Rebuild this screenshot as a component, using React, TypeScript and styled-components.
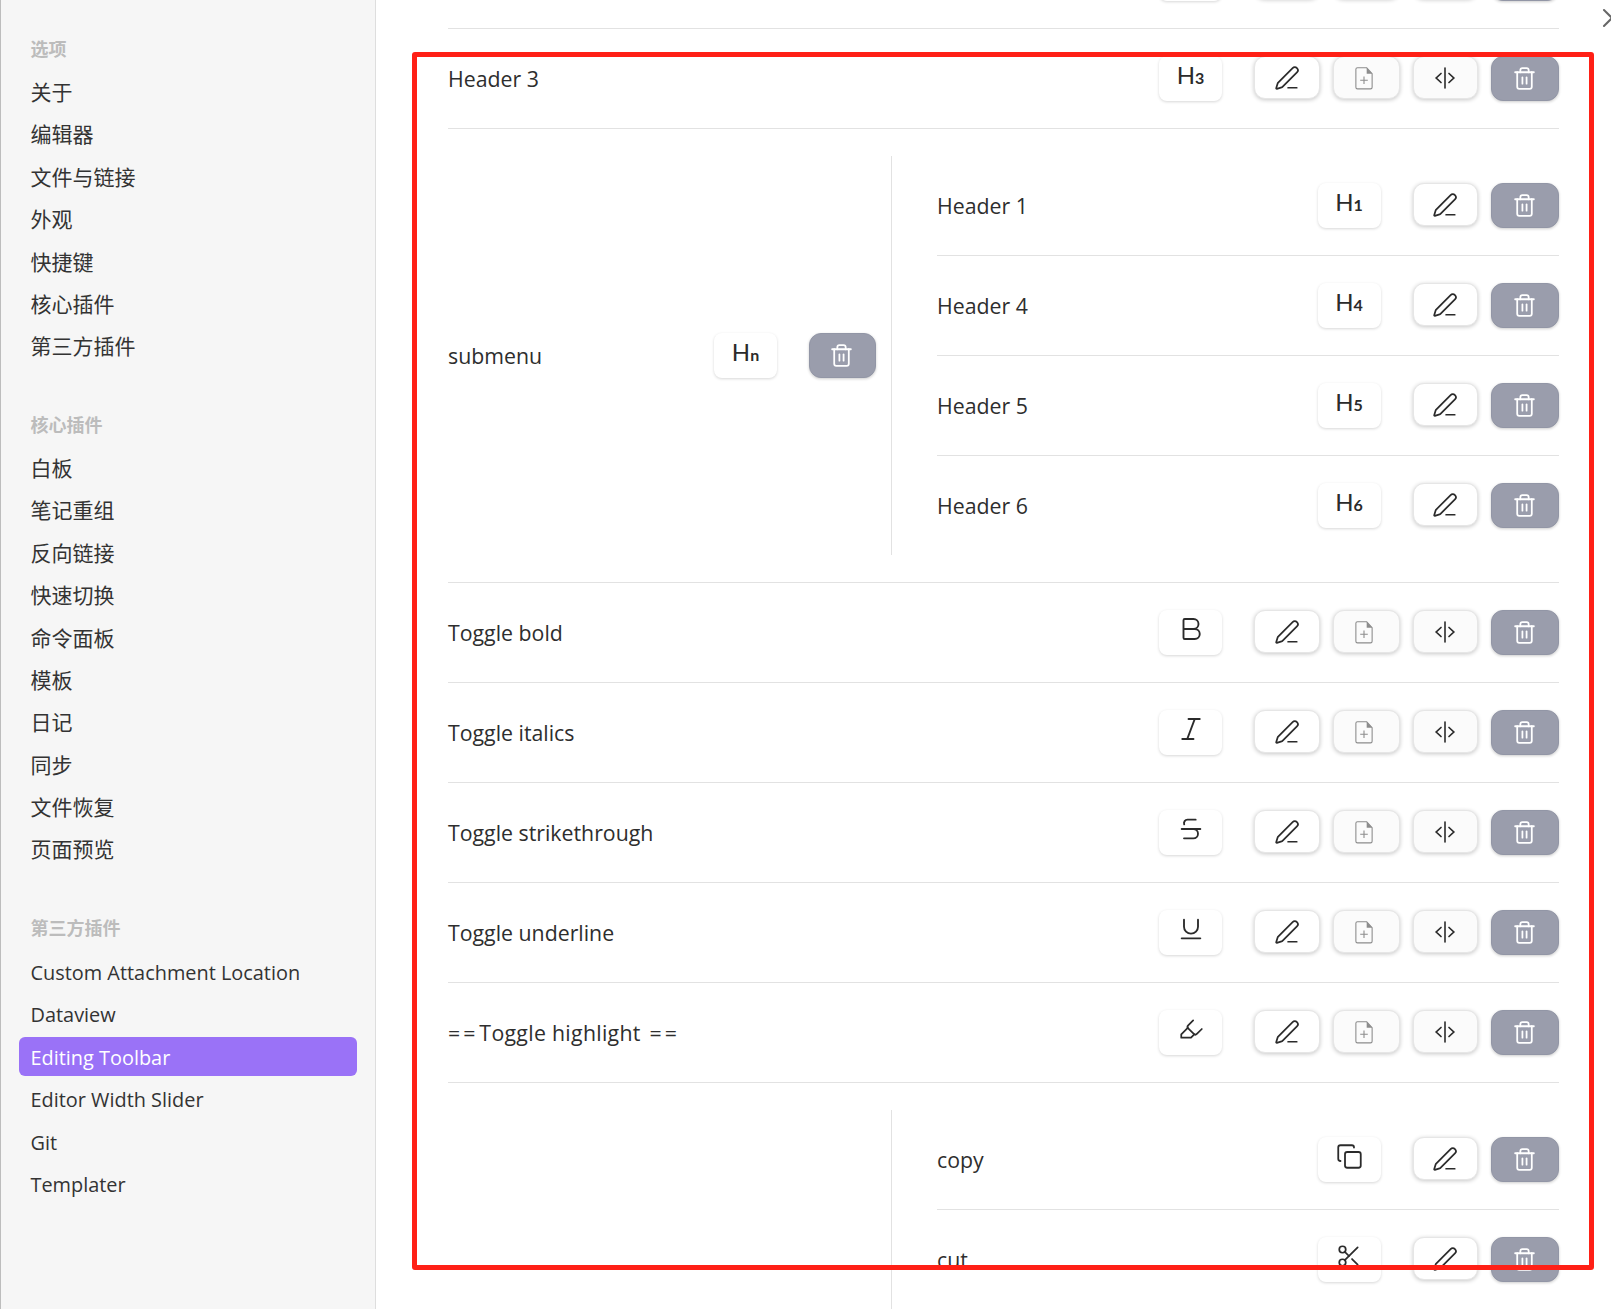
import React from 'react';
import styled, { createGlobalStyle } from 'styled-components';
import {
  Bold,
  Copy,
  Highlighter,
  Italic,
  PenLine,
  Scissors,
  Strikethrough,
  Trash2,
  Underline,
  X
} from 'lucide-react';

const FONT = '"Open Sans", "Noto Sans CJK SC", sans-serif';

const GlobalStyle = createGlobalStyle`
  html, body {
    margin: 0;
    padding: 0;
    height: 1309px;
    overflow: hidden;
    background: #fff;
  }
  * { box-sizing: border-box; }
`;

const Page = styled.div`
  position: relative;
  display: flex;
  width: 1611px;
  height: 1309px;
  overflow: hidden;
  font-family: ${FONT};
  color: #2e2e2e;
`;

const Sidebar = styled.nav`
  flex: 0 0 376px;
  height: 100%;
  padding: 35px 18px 0 18px;
  background: #f6f6f6;
  border-left: 1px solid #bdbdbd;
  border-right: 1px solid #dedede;
`;

const Section = styled.section`
  margin-bottom: 44.6px;
`;

const SectionTitle = styled.h3`
  margin: 0 0 10px;
  padding-left: 11.5px;
  height: 28px;
  line-height: 28px;
  font-size: 18px;
  font-weight: 700;
  color: #bcbcbc;
`;

const NavItem = styled.div<{ $active?: boolean; $latin?: boolean }>`
  height: 39px;
  margin-bottom: 3.4px;
  padding-left: 11.5px;
  line-height: ${({ $latin }) => ($latin ? '41px' : '39px')};
  font-size: ${({ $latin }) => ($latin ? '19.9px' : '21px')};
  font-weight: 400;
  border-radius: 6px;
  white-space: nowrap;
  color: ${({ $active }) => ($active ? '#fff' : '#333')};
  background: ${({ $active }) => ($active ? '#9a72f7' : 'transparent')};
`;

const Main = styled.main`
  flex: 1;
  padding: 0 52px 0 72px;
  min-width: 0;
`;

const List = styled.div`
  margin-top: -71px;
`;

const Row = styled.div`
  display: flex;
  align-items: center;
  justify-content: space-between;
  height: 100px;
  border-bottom: 1px solid #e2e2e2;
`;

const RowLabel = styled.div`
  font-size: 21.3px;
  line-height: 30px;
  color: #2e2e2e;
  white-space: pre;
`;

const WideMarks = styled.span`
  letter-spacing: 3px;
`;

const HighlightText = styled.span`
  margin: 0 3px 0 1px;
  letter-spacing: 0.3px;
`;

const Actions = styled.div`
  display: flex;
  align-items: flex-start;
`;

const Hotkey = styled.div`
  display: flex;
  align-items: center;
  justify-content: center;
  width: 63px;
  height: 45px;
  margin-right: 32px;
  padding-bottom: 7px;
  background: #fff;
  border-radius: 8px;
  box-shadow: 0 1px 3px rgba(0, 0, 0, 0.16);
  color: #2b2b2b;
`;

const HeadingMark = styled.span`
  font-family: "Lato", sans-serif;
  font-size: 24px;
  line-height: 1;
  color: #2b2b2b;

  small {
    font-size: 16px;
    font-weight: 700;
  }
`;

const ActionButton = styled.button<{ $dim?: boolean }>`
  display: flex;
  align-items: center;
  justify-content: center;
  width: 65.5px;
  height: 43px;
  margin-right: 13px;
  padding: 0;
  background: ${({ $dim }) => ($dim ? '#fbfbfb' : '#fff')};
  border: 1px solid #e6e6e6;
  border-radius: 11px;
  box-shadow: 0 1px 4px rgba(0, 0, 0, 0.22);
  color: #2b2b2b;
`;

const DocButton = styled(ActionButton)`
  width: 67px;
  padding-right: 4px;
`;

const DeleteButton = styled.button`
  display: flex;
  align-items: center;
  justify-content: center;
  width: 68px;
  height: 45px;
  padding: 0 2px 0 0;
  background: #9a9dac;
  border: 1px solid #9296a6;
  border-radius: 12px;
  box-shadow: 0 1px 3px rgba(0, 0, 0, 0.2);
  color: #fff;
`;

const Group = styled.div`
  display: flex;
  padding: 27px 0;
  border-bottom: 1px solid #e2e2e2;
`;

const GroupHead = styled.div`
  flex: 0 0 428px;
  display: flex;
  align-items: center;
  justify-content: space-between;
  margin-right: 15px;

  ${DeleteButton} {
    width: 67px;
  }
`;

const SubList = styled.div`
  flex: 1;
  padding-left: 45px;
  border-left: 1px solid #e2e2e2;
`;

const SubRow = styled(Row)`
  &:last-child {
    border-bottom: none;
    height: 99px;
  }
`;

const CloseIcon = styled.div`
  position: absolute;
  top: 2px;
  left: 1596px;
  color: #666;
  display: flex;
`;

const Annotation = styled.div`
  position: absolute;
  left: 412px;
  top: 52px;
  width: 1182px;
  height: 1218px;
  border: 5px solid #ff2016;
  border-radius: 3px;
  pointer-events: none;
`;

const PenIcon = () => <PenLine size={26} strokeWidth={1.6} />;

const DocPlusIcon = () => (
  <svg width="26" height="26" viewBox="0 0 24 24" fill="none">
    <path
      d="M6 2.5h8.5l5 5.5v12.5a1.5 1.5 0 0 1-1.5 1.5H6a1.5 1.5 0 0 1-1.5-1.5V4A1.5 1.5 0 0 1 6 2.5z"
      stroke="#8c8c8c"
      strokeWidth="1"
    />
    <path d="M14.5 2.5l5 5.5h-5z" fill="#8c8c8c" />
    <path d="M12 10.5v7M8.5 14h7" stroke="#8c8c8c" strokeWidth="1" />
  </svg>
);

const SplitIcon = () => (
  <svg width="24" height="24" viewBox="0 0 24 24" fill="none" stroke="#2b2b2b" strokeLinecap="round">
    <path d="M12 2v20" strokeWidth="1.6" />
    <path d="M8 7.5L3.2 12 8 16.5M16 7.5l4.8 4.5L16 16.5" strokeWidth="1.7" />
  </svg>
);

const TrashIcon = () => <Trash2 size={25} strokeWidth={1.7} />;

const heading = (main: string, sub: string) => (
  <HeadingMark>
    {main}
    <small>{sub}</small>
  </HeadingMark>
);

const boldIcon = <Bold size={30} strokeWidth={1.5} />;
const italicIcon = <Italic size={30} strokeWidth={1.5} />;
const strikeIcon = <Strikethrough size={28} strokeWidth={1.6} />;
const underlineIcon = <Underline size={28} strokeWidth={1.6} />;
const highlightIcon = <Highlighter size={26} strokeWidth={1.6} />;
const copyIcon = <Copy size={27} strokeWidth={1.6} />;
const cutIcon = <Scissors size={26} strokeWidth={1.6} />;

interface ItemProps {
  label?: React.ReactNode;
  icon?: React.ReactNode;
}

const FullRow: React.FC<ItemProps> = ({ label, icon }) => (
  <Row>
    <RowLabel>{label}</RowLabel>
    <Actions>
      <Hotkey>{icon}</Hotkey>
      <ActionButton>
        <PenIcon />
      </ActionButton>
      <DocButton $dim>
        <DocPlusIcon />
      </DocButton>
      <ActionButton $dim>
        <SplitIcon />
      </ActionButton>
      <DeleteButton>
        <TrashIcon />
      </DeleteButton>
    </Actions>
  </Row>
);

const NestedRow: React.FC<ItemProps> = ({ label, icon }) => (
  <SubRow>
    <RowLabel>{label}</RowLabel>
    <Actions>
      <Hotkey>{icon}</Hotkey>
      <ActionButton>
        <PenIcon />
      </ActionButton>
      <DeleteButton>
        <TrashIcon />
      </DeleteButton>
    </Actions>
  </SubRow>
);

const navSections = [
  {
    title: '选项',
    items: ['关于', '编辑器', '文件与链接', '外观', '快捷键', '核心插件', '第三方插件']
  },
  {
    title: '核心插件',
    items: ['白板', '笔记重组', '反向链接', '快速切换', '命令面板', '模板', '日记', '同步', '文件恢复', '页面预览']
  },
  {
    title: '第三方插件',
    latin: true,
    items: ['Custom Attachment Location', 'Dataview', 'Editing Toolbar', 'Editor Width Slider', 'Git', 'Templater']
  }
];

const highlightLabel = (
  <>
    <WideMarks>==</WideMarks>
    <HighlightText>Toggle highlight </HighlightText>
    <WideMarks>==</WideMarks>
  </>
);

const App: React.FC = () => (
  <Page>
    <GlobalStyle />
    <Sidebar>
      {navSections.map((section) => (
        <Section key={section.title}>
          <SectionTitle>{section.title}</SectionTitle>
          {section.items.map((item) => (
            <NavItem key={item} $latin={section.latin} $active={item === 'Editing Toolbar'}>
              {item}
            </NavItem>
          ))}
        </Section>
      ))}
    </Sidebar>

    <Main>
      <List>
        <FullRow />
        <FullRow label="Header 3" icon={heading('H', '3')} />
        <Group>
          <GroupHead>
            <RowLabel>submenu</RowLabel>
            <Actions>
              <Hotkey>{heading('H', 'n')}</Hotkey>
              <DeleteButton>
                <TrashIcon />
              </DeleteButton>
            </Actions>
          </GroupHead>
          <SubList>
            <NestedRow label="Header 1" icon={heading('H', '1')} />
            <NestedRow label="Header 4" icon={heading('H', '4')} />
            <NestedRow label="Header 5" icon={heading('H', '5')} />
            <NestedRow label="Header 6" icon={heading('H', '6')} />
          </SubList>
        </Group>
        <FullRow label="Toggle bold" icon={boldIcon} />
        <FullRow label="Toggle italics" icon={italicIcon} />
        <FullRow label="Toggle strikethrough" icon={strikeIcon} />
        <FullRow label="Toggle underline" icon={underlineIcon} />
        <FullRow label={highlightLabel} icon={highlightIcon} />
        <Group>
          <GroupHead />
          <SubList>
            <NestedRow label="copy" icon={copyIcon} />
            <NestedRow label="cut" icon={cutIcon} />
          </SubList>
        </Group>
      </List>
    </Main>

    <CloseIcon>
      <X size={32} strokeWidth={1.5} />
    </CloseIcon>
    <Annotation />
  </Page>
);

export default App;
